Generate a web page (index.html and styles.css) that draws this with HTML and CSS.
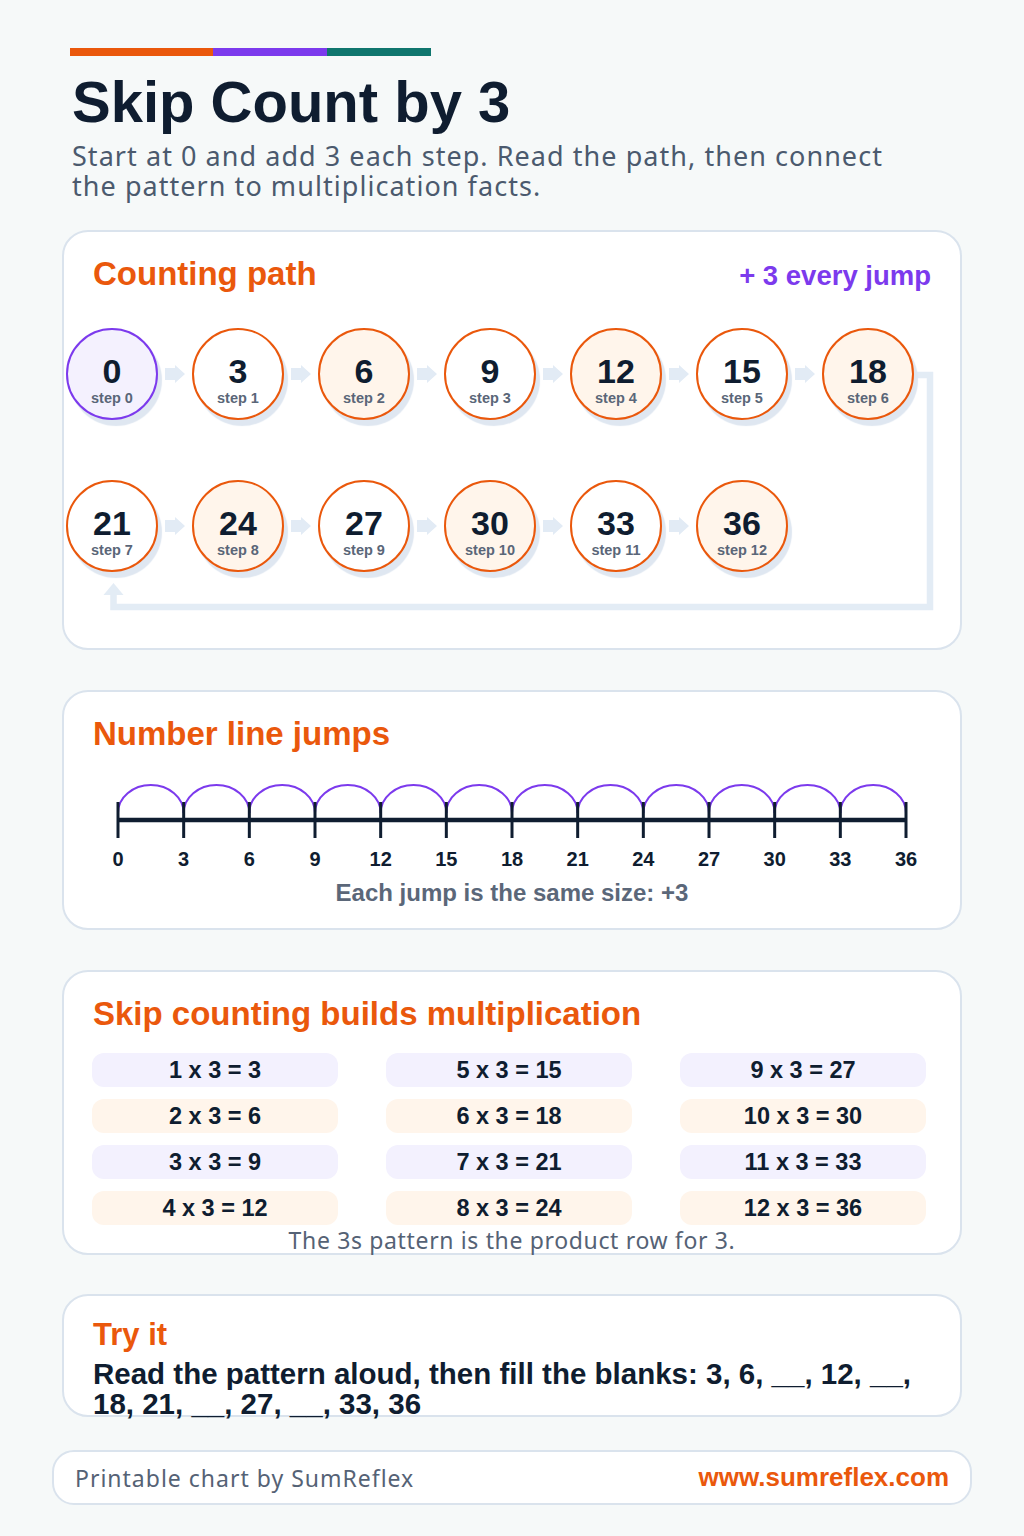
FILE: index.html
```html
<!DOCTYPE html>
<html lang="en">
<head>
<meta charset="utf-8">
<title>Skip Count by 3</title>
<link rel="stylesheet" href="styles.css">
</head>
<body>
<div class="page">
  <div class="bar"><span class="bar-o"></span><span class="bar-p"></span><span class="bar-t"></span></div>
  <h1 class="title">Skip Count by 3</h1>
  <p class="lead">Start at 0 and add 3 each step. Read the path, then connect the pattern to multiplication facts.</p>

  <section class="card card-path">
    <div class="card-head">
      <h2 class="card-title">Counting path</h2>
      <span class="tag">+ 3 every jump</span>
    </div>
    <div class="path">
      <svg class="connector" width="880" height="290" viewBox="0 0 880 290" aria-hidden="true">
        <polyline points="848,47 864,47 864,279 47.5,279 47.5,266" fill="none" stroke="#e3ecf5" stroke-width="6.5" stroke-linejoin="miter"/>
        <polygon points="37.5,267 57.5,267 47.5,255" fill="#e3ecf5"/>
      </svg>
      <div class="path-row">
        <div class="node node-start"><span class="num">0</span><span class="step">step 0</span></div>
        <div class="jump"><svg width="20" height="18" viewBox="0 0 20 18"><polygon points="0,3 10,3 10,0 20,9 10,18 10,15 0,15"/></svg></div>
        <div class="node"><span class="num">3</span><span class="step">step 1</span></div>
        <div class="jump"><svg width="20" height="18" viewBox="0 0 20 18"><polygon points="0,3 10,3 10,0 20,9 10,18 10,15 0,15"/></svg></div>
        <div class="node node-warm"><span class="num">6</span><span class="step">step 2</span></div>
        <div class="jump"><svg width="20" height="18" viewBox="0 0 20 18"><polygon points="0,3 10,3 10,0 20,9 10,18 10,15 0,15"/></svg></div>
        <div class="node"><span class="num">9</span><span class="step">step 3</span></div>
        <div class="jump"><svg width="20" height="18" viewBox="0 0 20 18"><polygon points="0,3 10,3 10,0 20,9 10,18 10,15 0,15"/></svg></div>
        <div class="node node-warm"><span class="num">12</span><span class="step">step 4</span></div>
        <div class="jump"><svg width="20" height="18" viewBox="0 0 20 18"><polygon points="0,3 10,3 10,0 20,9 10,18 10,15 0,15"/></svg></div>
        <div class="node"><span class="num">15</span><span class="step">step 5</span></div>
        <div class="jump"><svg width="20" height="18" viewBox="0 0 20 18"><polygon points="0,3 10,3 10,0 20,9 10,18 10,15 0,15"/></svg></div>
        <div class="node node-warm"><span class="num">18</span><span class="step">step 6</span></div>
      </div>
      <div class="path-row">
        <div class="node"><span class="num">21</span><span class="step">step 7</span></div>
        <div class="jump"><svg width="20" height="18" viewBox="0 0 20 18"><polygon points="0,3 10,3 10,0 20,9 10,18 10,15 0,15"/></svg></div>
        <div class="node node-warm"><span class="num">24</span><span class="step">step 8</span></div>
        <div class="jump"><svg width="20" height="18" viewBox="0 0 20 18"><polygon points="0,3 10,3 10,0 20,9 10,18 10,15 0,15"/></svg></div>
        <div class="node"><span class="num">27</span><span class="step">step 9</span></div>
        <div class="jump"><svg width="20" height="18" viewBox="0 0 20 18"><polygon points="0,3 10,3 10,0 20,9 10,18 10,15 0,15"/></svg></div>
        <div class="node node-warm"><span class="num">30</span><span class="step">step 10</span></div>
        <div class="jump"><svg width="20" height="18" viewBox="0 0 20 18"><polygon points="0,3 10,3 10,0 20,9 10,18 10,15 0,15"/></svg></div>
        <div class="node"><span class="num">33</span><span class="step">step 11</span></div>
        <div class="jump"><svg width="20" height="18" viewBox="0 0 20 18"><polygon points="0,3 10,3 10,0 20,9 10,18 10,15 0,15"/></svg></div>
        <div class="node node-warm"><span class="num">36</span><span class="step">step 12</span></div>
      </div>
    </div>
  </section>

  <section class="card card-line">
    <h2 class="card-title">Number line jumps</h2>
    <svg class="numline" width="838" height="120" viewBox="0 0 838 120">
      <g fill="none" stroke="#7c3aed" stroke-width="2">
        <path d="M25 59 A32.83 28 0 0 1 90.67 59"/>
        <path d="M90.67 59 A32.83 28 0 0 1 156.33 59"/>
        <path d="M156.33 59 A32.83 28 0 0 1 222 59"/>
        <path d="M222 59 A32.83 28 0 0 1 287.67 59"/>
        <path d="M287.67 59 A32.83 28 0 0 1 353.33 59"/>
        <path d="M353.33 59 A32.83 28 0 0 1 419 59"/>
        <path d="M419 59 A32.83 28 0 0 1 484.67 59"/>
        <path d="M484.67 59 A32.83 28 0 0 1 550.33 59"/>
        <path d="M550.33 59 A32.83 28 0 0 1 616 59"/>
        <path d="M616 59 A32.83 28 0 0 1 681.67 59"/>
        <path d="M681.67 59 A32.83 28 0 0 1 747.33 59"/>
        <path d="M747.33 59 A32.83 28 0 0 1 813 59"/>
      </g>
      <line x1="25" y1="66" x2="813" y2="66" stroke="#0f1d30" stroke-width="4.5"/>
      <g stroke="#0f1d30" stroke-width="3">
        <line x1="25" y1="48" x2="25" y2="84"/>
        <line x1="90.67" y1="48" x2="90.67" y2="84"/>
        <line x1="156.33" y1="48" x2="156.33" y2="84"/>
        <line x1="222" y1="48" x2="222" y2="84"/>
        <line x1="287.67" y1="48" x2="287.67" y2="84"/>
        <line x1="353.33" y1="48" x2="353.33" y2="84"/>
        <line x1="419" y1="48" x2="419" y2="84"/>
        <line x1="484.67" y1="48" x2="484.67" y2="84"/>
        <line x1="550.33" y1="48" x2="550.33" y2="84"/>
        <line x1="616" y1="48" x2="616" y2="84"/>
        <line x1="681.67" y1="48" x2="681.67" y2="84"/>
        <line x1="747.33" y1="48" x2="747.33" y2="84"/>
        <line x1="813" y1="48" x2="813" y2="84"/>
      </g>
      <g class="tick-label" text-anchor="middle">
        <text x="25" y="112">0</text>
        <text x="90.67" y="112">3</text>
        <text x="156.33" y="112">6</text>
        <text x="222" y="112">9</text>
        <text x="287.67" y="112">12</text>
        <text x="353.33" y="112">15</text>
        <text x="419" y="112">18</text>
        <text x="484.67" y="112">21</text>
        <text x="550.33" y="112">24</text>
        <text x="616" y="112">27</text>
        <text x="681.67" y="112">30</text>
        <text x="747.33" y="112">33</text>
        <text x="813" y="112">36</text>
      </g>
    </svg>
    <p class="caption">Each jump is the same size: +3</p>
  </section>

  <section class="card card-facts">
    <h2 class="card-title">Skip counting builds multiplication</h2>
    <div class="facts">
      <div class="fact fact-cool">1 x 3 = 3</div>
      <div class="fact fact-warm">2 x 3 = 6</div>
      <div class="fact fact-cool">3 x 3 = 9</div>
      <div class="fact fact-warm">4 x 3 = 12</div>
      <div class="fact fact-cool">5 x 3 = 15</div>
      <div class="fact fact-warm">6 x 3 = 18</div>
      <div class="fact fact-cool">7 x 3 = 21</div>
      <div class="fact fact-warm">8 x 3 = 24</div>
      <div class="fact fact-cool">9 x 3 = 27</div>
      <div class="fact fact-warm">10 x 3 = 30</div>
      <div class="fact fact-cool">11 x 3 = 33</div>
      <div class="fact fact-warm">12 x 3 = 36</div>
    </div>
    <p class="note">The 3s pattern is the product row for 3.</p>
  </section>

  <section class="card card-try">
    <h2 class="card-title try-title">Try it</h2>
    <p class="try-text">Read the pattern aloud, then fill the blanks: 3, 6, __, 12, __, 18, 21, __, 27, __, 33, 36</p>
  </section>

  <footer class="footer">
    <span class="footer-left">Printable chart by SumReflex</span>
    <span class="footer-right">www.sumreflex.com</span>
  </footer>
</div>
</body>
</html>
```

FILE: styles.css
```css
* { box-sizing: border-box; }

html, body {
  margin: 0;
  padding: 0;
  background: #f6f9f9;
}

body {
  font-family: "Liberation Sans", Arial, sans-serif;
  color: #0f1d30;
}

.page {
  width: 1024px;
  padding: 48px 62px 0;
}

.bar {
  display: flex;
  height: 8px;
  margin-left: 8px;
}
.bar-o { width: 143px; background: #ea580c; }
.bar-p { width: 114px; background: #7c3aed; }
.bar-t { width: 104px; background: #0f766e; }

.title {
  margin: 13px 0 0 10px;
  font-size: 58px;
  line-height: 66px;
  font-weight: 700;
  color: #0f1d30;
}

.lead {
  margin: 6px 0 0 10px;
  max-width: 840px;
  font-family: "Noto Sans", sans-serif;
  font-size: 27px;
  letter-spacing: 1.05px;
  line-height: 30px;
  color: #4b5a6e;
}

.card {
  background: #ffffff;
  border: 2px solid #dae3ed;
  border-radius: 26px;
  padding: 22px 29px 0;
}

.card-title {
  margin: 0;
  font-size: 33px;
  line-height: 40px;
  font-weight: 700;
  color: #ea580c;
}

/* Counting path */
.card-path {
  margin-top: 29px;
  padding-bottom: 32px;
}

.card-head {
  display: flex;
  justify-content: space-between;
  align-items: baseline;
}

.tag {
  font-size: 27.5px;
  font-weight: 700;
  color: #7c3aed;
}

.path {
  position: relative;
  margin: 34px -27px 0;
  display: flex;
  flex-direction: column;
  gap: 60px;
  padding-bottom: 44px;
}

.connector {
  position: absolute;
  left: 0;
  top: 0;
  z-index: 0;
}

.path-row {
  position: relative;
  z-index: 1;
  display: flex;
  align-items: center;
}

.node {
  width: 92px;
  height: 92px;
  flex: none;
  border: 2px solid #ea580c;
  border-radius: 50%;
  background: #ffffff;
  box-shadow: 4px 6px 1px #dfe7f1;
  display: flex;
  flex-direction: column;
  align-items: center;
  justify-content: center;
  padding-top: 10px;
}
.node-warm { background: #fff5eb; }
.node-start { border-color: #7c3aed; background: #f4f1fe; }

.num {
  font-size: 34px;
  line-height: 38px;
  font-weight: 700;
  color: #0f1d30;
}

.step {
  font-size: 14.5px;
  line-height: 17px;
  font-weight: 700;
  color: #5a6678;
}

.jump {
  width: 34px;
  flex: none;
  display: flex;
  justify-content: center;
}
.jump svg { display: block; fill: #e2ebf5; }

/* Number line */
.card-line {
  margin-top: 40px;
  padding-bottom: 21px;
}

.numline { display: block; }

.tick-label {
  font-family: "Liberation Sans", Arial, sans-serif;
  font-size: 20px;
  font-weight: 700;
  fill: #0f1d30;
}

.caption {
  margin: 5px 0 0;
  text-align: center;
  font-size: 24px;
  line-height: 28px;
  font-weight: 700;
  color: #5b6779;
}

/* Facts */
.card-facts {
  margin-top: 40px;
  padding-bottom: 0;
}

.facts {
  margin: 19px 0 0 -1px;
  display: grid;
  grid-template-columns: repeat(3, 246px);
  grid-template-rows: repeat(4, 34px);
  grid-auto-flow: column;
  column-gap: 48px;
  row-gap: 12px;
}

.fact {
  border-radius: 12px;
  text-align: center;
  font-size: 23.5px;
  line-height: 34px;
  font-weight: 700;
  color: #0f1d30;
}
.fact-cool { background: #f3f1fe; }
.fact-warm { background: #fff5eb; }

.note {
  margin: 2px 0 0;
  text-align: center;
  font-family: "Noto Sans", sans-serif;
  font-size: 23px;
  letter-spacing: 0.65px;
  line-height: 26px;
  color: #556275;
}

/* Try it */
.card-try {
  margin-top: 39px;
  padding-bottom: 0;
}

.try-title {
  font-size: 31px;
  line-height: 34px;
}

.try-text {
  margin: 7px 0 -4px;
  font-size: 29.5px;
  line-height: 30px;
  font-weight: 700;
  color: #0f1d30;
}

/* Footer */
.footer {
  margin: 33px -10px 0;
  height: 55px;
  background: #ffffff;
  border: 2px solid #dae3ed;
  border-radius: 22px;
  padding: 0 21px;
  display: flex;
  justify-content: space-between;
  align-items: center;
}

.footer-left {
  font-family: "Noto Sans", sans-serif;
  font-size: 23px;
  letter-spacing: 1px;
  color: #556275;
}

.footer-right {
  font-size: 26px;
  font-weight: 700;
  color: #ea580c;
}
```
